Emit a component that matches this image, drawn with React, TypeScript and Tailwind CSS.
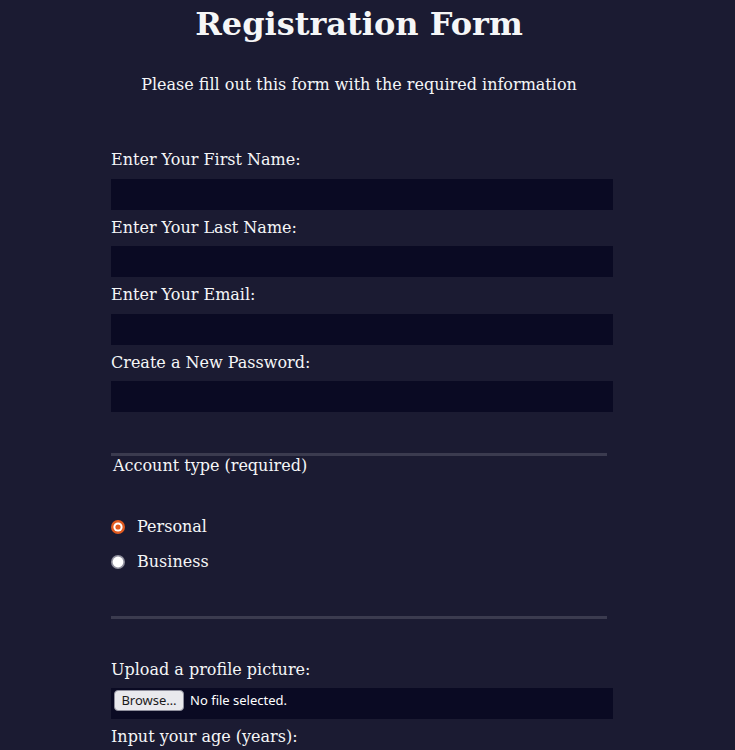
import React from "react";

function Radio({ checked }: { checked: boolean }) {
  return (
    <svg width="14" height="14" viewBox="0 0 14 14" className="shrink-0 mt-[6px] mr-[12px]">
      {checked ? (
        <>
          <circle cx="7" cy="7" r="7" fill="#e05a1f" />
          <circle cx="7" cy="7" r="4.6" fill="#ffffff" />
          <circle cx="7" cy="7" r="2.6" fill="#e05a1f" />
        </>
      ) : (
        <>
          <circle cx="7" cy="7" r="7" fill="#8f8f9d" />
          <circle cx="7" cy="7" r="5.4" fill="#ffffff" />
        </>
      )}
    </svg>
  );
}

function TextField({ label, type = "text" }: { label: string; type?: string }) {
  return (
    <label className="block my-2">
      <span className="block pt-[2px] leading-[16.5px]">{label}</span>
      <input
        type={type}
        className="block mt-[10px] w-[502px] h-[31px] bg-[#0a0a23] border border-[#0a0a23] text-white outline-none px-[2px]"
      />
    </label>
  );
}

export default function App() {
  return (
    <div
      className="min-h-screen bg-[#1b1b32] text-[#f5f6f7] text-[16px]"
      style={{ fontFamily: '"DejaVu Serif", serif' }}
    >
      <div className="w-[718px] pb-8">
        <h1 className="pt-[6px] text-[32px] leading-[37px] font-bold text-center">
          Registration Form
        </h1>
        <p className="mt-[32px] leading-[19px] text-center">
          Please fill out this form with the required information
        </p>
        <form className="w-[500px] mx-auto mt-4" onSubmit={(e) => e.preventDefault()}>
          <div className="mx-[2px] pt-8 pb-[33px] border-b-[3px] border-[#3b3b4f]">
            <TextField label="Enter Your First Name:" />
            <TextField label="Enter Your Last Name:" />
            <TextField label="Enter Your Email:" type="email" />
            <TextField label="Create a New Password:" type="password" />
          </div>

          <div className="mx-[2px] border-b-[3px] border-[#3b3b4f]">
            <div className="px-[2px] pt-[2px] leading-[16px]">Account type (required)</div>
            <div className="pt-8 pb-8">
              <label className="flex items-start my-2 h-[27px]">
                <Radio checked={true} />
                <span className="mt-[3px] leading-[19px]">Personal</span>
              </label>
              <label className="flex items-start my-2 h-[27px]">
                <Radio checked={false} />
                <span className="mt-[3px] leading-[19px]">Business</span>
              </label>
            </div>
          </div>

          <div className="mx-[2px] pt-8 pb-8">
            <label className="block my-2">
              <span className="block pt-[2px] leading-[17px]">Upload a profile picture:</span>
              <div className="mt-[10px] w-[502px] h-[31px] bg-[#0a0a23] flex items-start pt-[2px] pl-[3px]">
                <span
                  className="h-[21px] w-[70px] flex items-center justify-center bg-[#e9e9ed] border border-[#8f8f9d] rounded-[4px] text-[13px] text-[#1b1b1b]"
                  style={{ fontFamily: '"Noto Sans", sans-serif' }}
                >
                  Browse…
                </span>
                <span
                  className="ml-[6px] h-[21px] flex items-center text-[13px] text-white"
                  style={{ fontFamily: '"Noto Sans", sans-serif' }}
                >
                  No file selected.
                </span>
              </div>
            </label>
            <TextField label="Input your age (years):" type="number" />
          </div>
        </form>
      </div>
    </div>
  );
}
